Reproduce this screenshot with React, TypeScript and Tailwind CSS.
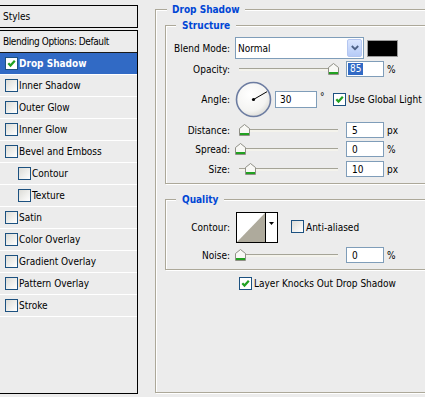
import React from "react";

const FONT = "font-['DejaVu_Sans_Condensed','DejaVu_Sans',sans-serif]";

function CheckBox({ checked }: { checked?: boolean }) {
  return (
    <span
      className={`relative inline-block h-[13px] w-[13px] shrink-0 border border-[#1c5180] ${
        checked ? "bg-white" : "bg-gradient-to-br from-[#dcdcd7] to-white"
      }`}
    >
      {checked ? (
        <svg viewBox="0 0 11 11" className="absolute left-0 top-0 h-[11px] w-[11px]">
          <path d="M2.3 5.2 L4.5 7.6 L8.8 2.8" fill="none" stroke="#21a121" strokeWidth="2.2" />
        </svg>
      ) : null}
    </span>
  );
}

function Thumb({ className }: { className: string }) {
  return (
    <svg width="11" height="12" viewBox="0 0 11 12" className={className}>
      <path d="M0.5 11.5 V4.5 L5.5 0.5 L10.5 4.5 V11.5 Z" fill="#f8f8f5" stroke="#8f8f86" />
      <rect x="1" y="9" width="9" height="2" fill="#21a121" />
    </svg>
  );
}

function Slider({ thumb }: { thumb: string }) {
  return (
    <div className="relative flex h-[16px] w-[103px] items-center">
      <div className="ml-[4px] h-[3px] flex-1 border-t border-[#a5a497] bg-[#f4f3ec]" />
      <Thumb className={`absolute top-[2px] ${thumb}`} />
    </div>
  );
}

function NumBox({ children, className }: { children: React.ReactNode; className?: string }) {
  return (
    <div
      className={`flex shrink-0 items-center border border-[#7f9db9] bg-white ${
        className ?? "h-[16px] w-[38px] pl-[5px]"
      }`}
    >
      {children}
    </div>
  );
}

function Row({
  label,
  className,
  children,
}: {
  label: string;
  className: string;
  children: React.ReactNode;
}) {
  return (
    <div className={`flex items-center ${className}`}>
      <span className="w-[64px] shrink-0 text-right">{label}</span>
      <div className="ml-[5px] flex items-center">{children}</div>
    </div>
  );
}

function GroupTitle({ children, className }: { children: React.ReactNode; className: string }) {
  return (
    <span
      className={`absolute top-[-7px] bg-[#ececec] font-bold leading-[13px] text-[#0046d5] ${className}`}
    >
      {children}
    </span>
  );
}

const styleItems = [
  { name: "Drop Shadow", checked: true, sub: false },
  { name: "Inner Shadow", checked: false, sub: false },
  { name: "Outer Glow", checked: false, sub: false },
  { name: "Inner Glow", checked: false, sub: false },
  { name: "Bevel and Emboss", checked: false, sub: false },
  { name: "Contour", checked: false, sub: true },
  { name: "Texture", checked: false, sub: true },
  { name: "Satin", checked: false, sub: false },
  { name: "Color Overlay", checked: false, sub: false },
  { name: "Gradient Overlay", checked: false, sub: false },
  { name: "Pattern Overlay", checked: false, sub: false },
  { name: "Stroke", checked: false, sub: false },
];

function StylesPanel() {
  return (
    <div className="ml-[-1px] flex w-[139px] shrink-0 flex-col pb-[3px] pt-[5px]">
      <div className="flex h-[23px] items-center border border-black pl-[3px]">Styles</div>
      <div className="mt-[2px] flex flex-1 flex-col border border-black">
        <div className="flex h-[22px] items-center border-b border-[#1a1a1a] pl-[3px] tracking-[-0.4px]">
          Blending Options: Default
        </div>
        {styleItems.map((item) => (
          <div
            key={item.name}
            className={`flex h-[22px] items-center border-b border-white ${
              item.checked ? "bg-[#316ac5] font-bold text-white" : ""
            } ${item.sub ? "pl-[18px]" : "pl-[5px]"}`}
          >
            <CheckBox checked={item.checked} />
            <span className="ml-[1px]">{item.name}</span>
          </div>
        ))}
      </div>
    </div>
  );
}

function Dial() {
  return (
    <svg width="37" height="37" viewBox="0 0 37 37" className="shrink-0">
      <defs>
        <radialGradient id="dialFill" cx="0.4" cy="0.35" r="0.7">
          <stop offset="0" stopColor="#ffffff" />
          <stop offset="0.7" stopColor="#f4f4f2" />
          <stop offset="1" stopColor="#d9d9d4" />
        </radialGradient>
      </defs>
      <circle cx="18.5" cy="18.5" r="17" fill="url(#dialFill)" stroke="#6c7ca1" strokeWidth="1.6" />
      <line x1="18.5" y1="18.5" x2="32" y2="10.7" stroke="#000" strokeWidth="1" />
      <circle cx="18.5" cy="18.5" r="1.6" fill="#000" />
    </svg>
  );
}

function BlendSelect() {
  return (
    <div className="flex h-[22px] w-[129px] items-center border border-[#7f9db9] bg-white pl-[2px]">
      <span>Normal</span>
      <span className="ml-auto mr-[1px] flex h-[18px] w-[15px] items-center justify-center rounded-[2px] border border-[#b4c6f0] bg-gradient-to-b from-[#dbe6fe] to-[#b6cbf7]">
        <svg width="8" height="6" viewBox="0 0 8 6">
          <path d="M0.8 1 L4 4.2 L7.2 1" fill="none" stroke="#4d6185" strokeWidth="1.8" />
        </svg>
      </span>
    </div>
  );
}

function ContourSwatch() {
  return (
    <div className="ml-[1px] flex h-[31px] w-[42px] border border-black bg-white">
      <svg width="28" height="29" viewBox="0 0 28 29" className="shrink-0">
        <path d="M0 29 L28 0 L28 29 Z" fill="#aeaa9c" />
      </svg>
      <div className="flex flex-1 justify-center border-l border-black pt-[9px]">
        <svg width="5" height="3" viewBox="0 0 5 3">
          <path d="M0 0 H5 L2.5 3 Z" fill="#000" />
        </svg>
      </div>
    </div>
  );
}

function DropShadowPanel() {
  return (
    <div className="ml-[17px] mt-[9px] shrink-0">
      <div className="relative flex h-[384px] w-[300px] flex-col border border-[#aca899] shadow-[inset_1px_1px_0_#fff,1px_1px_0_#fff]">
        <GroupTitle className="left-[11px] px-[5px]">Drop Shadow</GroupTitle>

        <div className="relative ml-[9px] mr-[9px] mt-[15px] flex flex-col border border-[#aca899] pb-[6px] pt-[11px] shadow-[inset_1px_1px_0_#fff,1px_1px_0_#fff]">
          <GroupTitle className="left-[10px] px-[6px]">Structure</GroupTitle>

          <Row label="Blend Mode:" className="h-[22px]">
            <BlendSelect />
            <span className="ml-[3px] h-[17px] w-[31px] border border-[#9a9a9a] bg-black" />
          </Row>

          <Row label="Opacity:" className="mt-[2px] h-[16px]">
            <Slider thumb="left-[93px]" />
            <NumBox className="ml-[8px] h-[16px] w-[38px] pl-[1px]">
              <span className="bg-[#316ac5] px-[2px] leading-[12px] text-white">85</span>
            </NumBox>
            <span className="ml-[3px]">%</span>
          </Row>

          <Row label="Angle:" className="mt-[4px] h-[37px]">
            <Dial />
            <NumBox className="ml-[3px] h-[17px] w-[42px] pl-[4px]">30</NumBox>
            <span className="ml-[3px] w-[13px] self-start pt-[9px]">°</span>
            <CheckBox checked />
            <span className="ml-[2px]">Use Global Light</span>
          </Row>

          <Row label="Distance:" className="mt-[4px] h-[16px]">
            <Slider thumb="left-[4px]" />
            <NumBox className="ml-[8px] h-[16px] w-[38px] pl-[5px]">5</NumBox>
            <span className="ml-[3px]">px</span>
          </Row>

          <Row label="Spread:" className="mt-[3px] h-[16px]">
            <Slider thumb="left-[0px]" />
            <NumBox className="ml-[8px] h-[16px] w-[38px] pl-[5px]">0</NumBox>
            <span className="ml-[3px]">%</span>
          </Row>

          <Row label="Size:" className="mt-[4px] h-[16px]">
            <Slider thumb="left-[10px]" />
            <NumBox className="ml-[8px] h-[16px] w-[38px] pl-[5px]">10</NumBox>
            <span className="ml-[3px]">px</span>
          </Row>
        </div>

        <div className="relative ml-[9px] mr-[9px] mt-[15px] flex flex-col border border-[#aca899] pb-[6px] pt-[12px] shadow-[inset_1px_1px_0_#fff,1px_1px_0_#fff]">
          <GroupTitle className="left-[10px] px-[6px]">Quality</GroupTitle>

          <Row label="Contour:" className="h-[31px]">
            <ContourSwatch />
            <span className="ml-[13px]">
              <CheckBox />
            </span>
            <span className="ml-[2px]">Anti-aliased</span>
          </Row>

          <Row label="Noise:" className="mt-[4px] h-[16px]">
            <Slider thumb="left-[0px]" />
            <NumBox className="ml-[8px] h-[16px] w-[38px] pl-[5px]">0</NumBox>
            <span className="ml-[3px]">%</span>
          </Row>
        </div>

        <div className="ml-[83px] mt-[7px] flex h-[13px] items-center">
          <CheckBox checked />
          <span className="ml-[2px]">Layer Knocks Out Drop Shadow</span>
        </div>
      </div>
    </div>
  );
}

export default function App() {
  return (
    <div
      className={`flex h-[397px] w-[425px] overflow-hidden bg-[#ececec] text-[10px] leading-[13px] text-black ${FONT}`}
    >
      <StylesPanel />
      <DropShadowPanel />
    </div>
  );
}
